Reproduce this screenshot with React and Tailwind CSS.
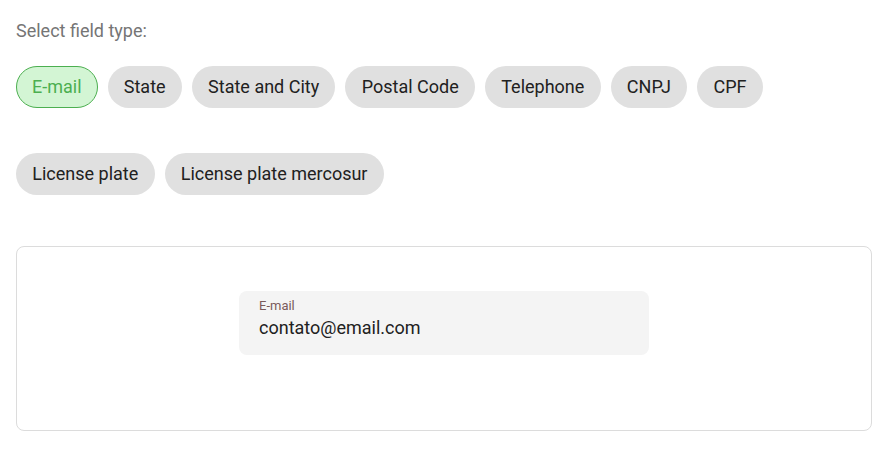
import { useState } from 'react'

const types = ['E-mail', 'State', 'State and City', 'Postal Code', 'Telephone', 'CNPJ', 'CPF', 'License plate', 'License plate mercosur']

export default function App() {
  const [selected, setSelected] = useState('E-mail')

  return (
    <div className="bg-white w-[882px] h-[449px] pl-4 pt-[19px] font-['Roboto',sans-serif]">
      <p className="text-lg text-[#757575] leading-6">Select field type:</p>

      <div className="flex flex-wrap gap-x-[10px] gap-y-[45px] mt-[23px] w-[760px]">
        {types.map(t => (
          <button
            key={t}
            onClick={() => setSelected(t)}
            className={
              selected === t
                ? 'h-[42px] px-[15px] rounded-full border border-[#4caf50] bg-[#d3f5d4] text-[#4caf50] text-lg'
                : 'h-[42px] px-[16.25px] rounded-full bg-[#e0e0e0] text-[#212121] text-lg'
            }
          >
            {t}
          </button>
        ))}
      </div>

      <div className="mt-[51px] w-[856px] border border-[#dcdcdc] rounded-lg h-[185px] flex justify-center pt-[44px]">
        <div className="w-[410px] h-[64px] bg-[#f4f4f4] rounded-lg px-5 pt-[7px]">
          <p className="text-[13px] text-[#7a5b5b] leading-4">E-mail</p>
          <p className="text-lg text-[#212121] leading-6 mt-[2px]">contato@email.com</p>
        </div>
      </div>
    </div>
  )
}
